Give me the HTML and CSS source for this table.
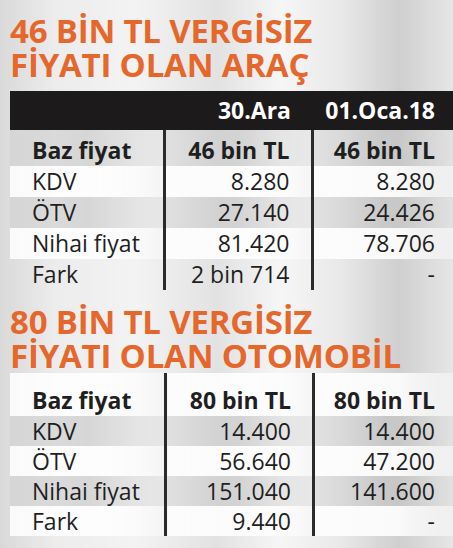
FILE: index.html
```html
<!DOCTYPE html>
<html lang="tr">
<head>
    <meta charset="UTF-8">
    <meta name="viewport" content="width=device-width, initial-scale=1.0">
    <title>Vergisiz fiyat</title>
    <link rel="stylesheet" href="styles.css">
</head>
<body>
    <div class="page">
        <h2 class="title">46 BİN TL VERGİSİZ<br>FİYATI OLAN ARAÇ</h2>
        <table class="prices first">
            <tr class="head">
                <th></th>
                <th>30.Ara</th>
                <th>01.Oca.18</th>
            </tr>
            <tr class="base band-gray">
                <td>Baz fiyat</td>
                <td>46 bin TL</td>
                <td>46 bin TL</td>
            </tr>
            <tr class="band-white">
                <td>KDV</td>
                <td>8.280</td>
                <td>8.280</td>
            </tr>
            <tr class="band-gray">
                <td>ÖTV</td>
                <td>27.140</td>
                <td>24.426</td>
            </tr>
            <tr class="band-white">
                <td>Nihai fiyat</td>
                <td>81.420</td>
                <td>78.706</td>
            </tr>
            <tr>
                <td>Fark</td>
                <td>2 bin 714</td>
                <td>-</td>
            </tr>
        </table>

        <h2 class="title second-title">80 BİN TL VERGİSİZ<br>FİYATI OLAN OTOMOBİL</h2>
        <table class="prices second">
            <tr class="base band-white">
                <td>Baz fiyat</td>
                <td>80 bin TL</td>
                <td>80 bin TL</td>
            </tr>
            <tr class="band-gray">
                <td>KDV</td>
                <td>14.400</td>
                <td>14.400</td>
            </tr>
            <tr class="band-white">
                <td>ÖTV</td>
                <td>56.640</td>
                <td>47.200</td>
            </tr>
            <tr class="band-gray">
                <td>Nihai fiyat</td>
                <td>151.040</td>
                <td>141.600</td>
            </tr>
            <tr class="band-white">
                <td>Fark</td>
                <td>9.440</td>
                <td>-</td>
            </tr>
        </table>
    </div>
</body>
</html>
```

FILE: styles.css
```css
html, body {
    margin: 0;
    height: 100%;
}
body {
    font-family: "Open Sans", "DejaVu Sans", sans-serif;
    color: #1f1f1f;
    background: linear-gradient(90deg, #d9d9d9 0%, #ececec 12%, #f3f3f3 30%, #e2e2e2 48%, #f6f6f6 62%, #e9e9e9 75%, #cfcfcf 88%, #e6e6e6 100%);
    overflow: hidden;
}
.page {
    padding-top: 14px;
}
.title {
    margin: 0;
    padding-left: 10px;
    font-size: 33px;
    line-height: 34px;
    font-weight: 700;
    color: #e5672c;
    letter-spacing: -0.2px;
}
.second-title {
    margin-top: 15px;
}
.prices {
    margin-left: 10px;
    width: 443px;
    border-collapse: collapse;
    table-layout: fixed;
    font-size: 23px;
}
.prices.first {
    margin-top: 9px;
}
.prices td, .prices th {
    padding: 0;
    line-height: 31px;
    white-space: nowrap;
}
.prices td:first-child {
    width: 132px;
    padding-left: 22px;
    text-align: left;
}
.prices td:nth-child(2) {
    width: 124px;
    padding-right: 21px;
    border-left: 3px solid #2b2b2b;
    text-align: right;
}
.prices td:nth-child(3) {
    padding-right: 18px;
    border-left: 3px solid #2b2b2b;
    text-align: right;
}
.prices .head th {
    background: #1c1a1b;
    color: #fff;
    font-weight: 700;
    line-height: 39px;
    text-align: right;
}
.prices .head th:first-child {
    width: 154px;
}
.prices .head th:nth-child(2) {
    width: 148px;
    padding-right: 21px;
    box-sizing: border-box;
}
.prices .head th:nth-child(3) {
    padding-right: 18px;
}
.prices .base td {
    font-weight: 700;
    padding-top: 5px;
}
.second .base td {
    padding-top: 12px;
}
.second tr:not(.base) td {
    line-height: 30px;
}
.band-white td {
    background: linear-gradient(90deg, rgba(255,255,255,0.85) 0%, rgba(255,255,255,0.9) 60%, rgba(255,255,255,0.4) 100%);
}
.band-gray td {
    background: linear-gradient(90deg, rgba(200,200,200,0.35) 0%, rgba(185,185,185,0.45) 50%, rgba(215,215,215,0.3) 100%);
}
```
